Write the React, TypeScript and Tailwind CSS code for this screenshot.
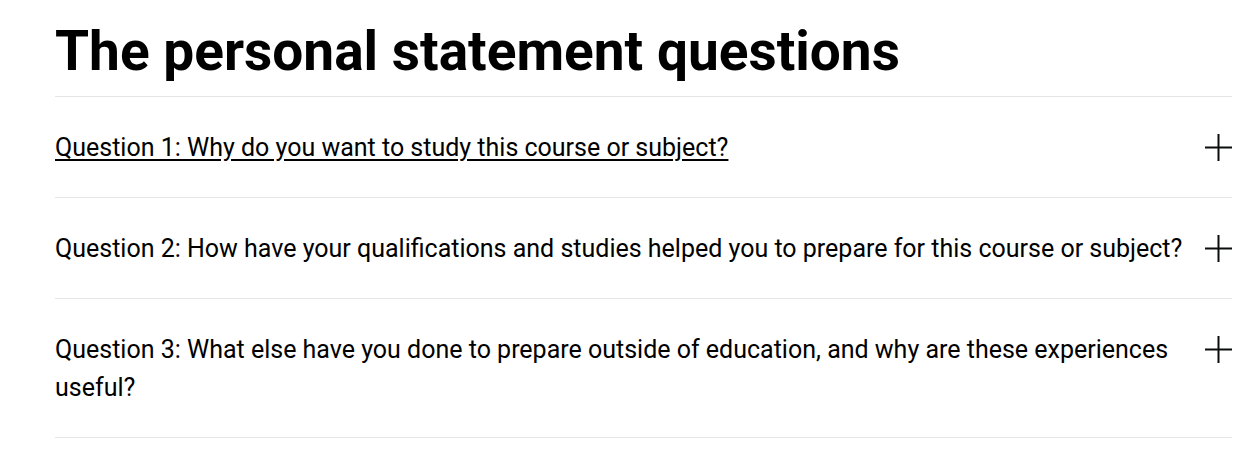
const questions = [
  'Question 1: Why do you want to study this course or subject?',
  'Question 2: How have your qualifications and studies helped you to prepare for this course or subject?',
  'Question 3: What else have you done to prepare outside of education, and why are these experiences useful?',
];

function PlusIcon() {
  return (
    <svg width="27" height="27" viewBox="0 0 27 27" className="mt-[5px] flex-shrink-0" aria-hidden="true">
      <path d="M13.5 0v27M0 13.5h27" stroke="#0b0c0c" strokeWidth="2" fill="none" />
    </svg>
  );
}

export default function App() {
  return (
    <div className="min-h-screen bg-white pl-[55px] pr-[24px] text-black" style={{ fontFamily: 'Roboto, "Liberation Sans", sans-serif' }}>
      <h1 className="pt-[18px] pb-[11px] text-[55px] font-bold leading-[67px] text-black">
        The personal statement questions
      </h1>
      <div className="border-t border-[#e5e5e5]">
        {questions.map((q, i) => (
          <div key={i} className="flex items-start justify-between gap-[22px] border-b border-[#e5e5e5] pt-[32px] pb-[30.5px]">
            <span className={`text-[25px] leading-[37.5px] text-black ${i === 0 ? 'underline underline-offset-[3px]' : ''}`}>
              {q}
            </span>
            <PlusIcon />
          </div>
        ))}
      </div>
    </div>
  );
}
